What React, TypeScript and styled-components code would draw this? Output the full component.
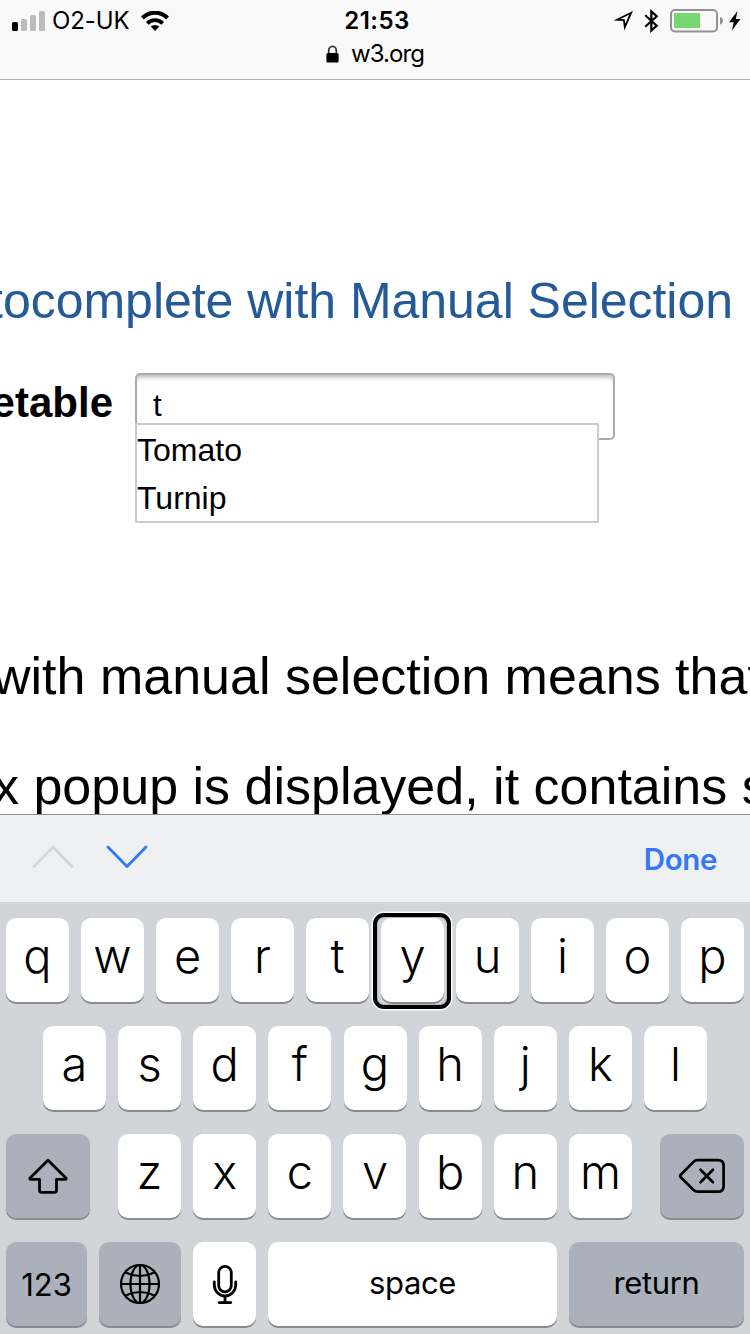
import React from "react";
import styled, { createGlobalStyle } from "styled-components";

const GlobalStyle = createGlobalStyle`
  *, *::before, *::after { box-sizing: border-box; }
  html, body { margin: 0; padding: 0; background: #fff; }
  body { overflow: hidden; }
`;

const ui = `Inter, "Liberation Sans", sans-serif`;
const web = `"Liberation Sans", Arial, sans-serif`;

const Screen = styled.div`
  width: 750px;
  height: 1334px;
  display: flex;
  flex-direction: column;
  overflow: hidden;
  background: #fff;
  color: #000;
`;

const Header = styled.header`
  flex: none;
  height: 80px;
  background: #f9f9f9;
  border-bottom: 1px solid #b2b2b2;
  font-family: ${ui};
`;

const StatusRow = styled.div`
  height: 41px;
  display: grid;
  grid-template-columns: 1fr auto 1fr;
  align-items: center;
  padding: 1px 9px 0 12px;
`;

const StatusGroup = styled.div<{ $end?: boolean }>`
  display: flex;
  align-items: center;
  justify-content: ${(p) => (p.$end ? "flex-end" : "flex-start")};
`;

const Carrier = styled.span`
  font-size: 24px;
  line-height: 40px;
  letter-spacing: -0.1px;
  margin: 0 11px 0 6px;
`;

const Clock = styled.span`
  font-size: 24px;
  line-height: 40px;
  font-weight: 600;
  letter-spacing: 0.5px;
  margin-left: 1px;
`;

const StatusIcons = styled.div`
  display: flex;
  align-items: center;
  justify-content: flex-end;
  gap: 11px;
`;

const Power = styled.div`
  display: flex;
  align-items: center;
  gap: 5px;
`;

const AddressRow = styled.div`
  display: flex;
  justify-content: center;
  align-items: center;
  gap: 12px;
  height: 25px;
`;

const Host = styled.span`
  font-size: 24px;
  line-height: 25px;
  letter-spacing: -0.9px;
`;

const Page = styled.main`
  flex: none;
  height: 734px;
  overflow: hidden;
  font-family: ${web};
`;

const Heading = styled.h3`
  margin: 0;
  padding: 192px 17px 0 0;
  display: flex;
  justify-content: flex-end;
  font-size: 50px;
  line-height: 58px;
  letter-spacing: -0.03px;
  font-weight: 400;
  white-space: nowrap;
  color: #255a99;
`;

const Field = styled.div`
  display: flex;
  height: 67px;
  margin-top: 43px;
`;

const Label = styled.label`
  flex: none;
  width: 135px;
  padding-right: 22px;
  display: flex;
  justify-content: flex-end;
  font-size: 42px;
  line-height: 60px;
  font-weight: 700;
`;

const Combobox = styled.div`
  position: relative;
  width: 480px;
  height: 67px;
`;

const TextBox = styled.div`
  height: 67px;
  border: 2px solid #a9abaa;
  border-radius: 5px;
  padding-left: 16px;
  font-size: 31px;
  line-height: 62px;
  box-shadow: inset 0 5px 5px -3px rgba(0, 0, 0, 0.3);
`;

const ListBox = styled.ul`
  position: absolute;
  left: 0;
  top: 50px;
  width: 464px;
  height: 100px;
  margin: 0;
  padding: 0;
  list-style: none;
  background: #fff;
  border: 2px solid #cbcbcb;
`;

const Option = styled.li`
  height: 48px;
  font-size: 32px;
  line-height: 50px;
`;

const Prose = styled.div`
  padding-top: 206px;
`;

const Line = styled.p<{ $shift: number }>`
  margin: 0 0 50px ${(p) => p.$shift}px;
  font-size: 52px;
  line-height: 60px;
  white-space: nowrap;
`;

const Accessory = styled.div`
  flex: none;
  height: 88px;
  display: flex;
  align-items: center;
  padding: 0 33px 0 32px;
  background: #eff0f2;
  border-top: 1px solid #8e8e91;
  font-family: ${ui};
`;

const Arrows = styled.div`
  display: flex;
  gap: 32px;
  padding-bottom: 3px;
`;

const Done = styled.span`
  margin-left: auto;
  padding-top: 1px;
  font-size: 29.5px;
  line-height: 40px;
  font-weight: 600;
  letter-spacing: -0.4px;
  color: #3478f7;
`;

const Keyboard = styled.section`
  flex: 1;
  display: flex;
  flex-direction: column;
  gap: 24px;
  padding: 16px 6px 0;
  background: #d1d4d9;
  font-family: ${ui};
`;

const KeyRow = styled.div<{ $inset?: number }>`
  display: flex;
  justify-content: space-between;
  padding: 0 ${(p) => p.$inset ?? 0}px;
`;

const KeyGroup = styled.div<{ $width: number }>`
  width: ${(p) => p.$width}px;
  display: flex;
  justify-content: space-between;
`;

const KeyCap = styled.div<{ $width?: number; $dark?: boolean }>`
  position: relative;
  flex: none;
  width: ${(p) => p.$width ?? 63}px;
  height: 84px;
  display: flex;
  align-items: center;
  justify-content: center;
  border-radius: 10px;
  background: ${(p) => (p.$dark ? "#abb1bb" : "#fff")};
  box-shadow: 0 2px 0 #898b8f;
`;

const Letter = styled.span`
  padding-bottom: 8px;
  font-size: 47px;
  line-height: 60px;
  font-weight: 350;
`;

const Word = styled.span<{ $lift?: number }>`
  padding-bottom: ${(p) => p.$lift ?? 0}px;
  letter-spacing: -0.4px;
  font-size: 31px;
  line-height: 40px;
`;

const Digits = styled.span`
  padding-top: 1px;
  font-size: 31px;
  line-height: 40px;
`;

const FocusRing = styled.span`
  position: absolute;
  inset: -5px -7px -7px -8.5px;
  border: 4px solid #000;
  border-radius: 11px;
  box-shadow: 0 0 0 1.5px #fff, inset 0 0 0 1px #b9bbc0;
`;

const SignalBars = () => (
  <svg width="34" height="20" viewBox="0 0 34 20">
    <rect x="0" y="11" width="6" height="9" rx="1.6" />
    <g fill="#bbb">
      <rect x="9" y="8" width="6" height="12" rx="1.6" />
      <rect x="18" y="4" width="6" height="16" rx="1.6" />
      <rect x="27" y="0" width="6" height="20" rx="1.6" />
    </g>
  </svg>
);

const Wifi = () => (
  <svg width="28" height="20" viewBox="0 0 28 20">
    <path d="M1.4 7a17.8 17.8 0 0 1 25.2 0" fill="none" stroke="#000" strokeWidth="4.2" />
    <path d="M6.300 12.300a10.900 10.900 0 0 1 15.400 0" fill="none" stroke="#000" strokeWidth="3.900" />
    <path d="M9.700 15.600a6.300 6.300 0 0 1 8.600 0L14 20z" />
  </svg>
);

const Location = () => (
  <svg width="19" height="20" viewBox="0 0 19 20">
    <path d="M17.200 1.700 3 8.700 9.900 9.200 10.800 16.200z" fill="none" stroke="#000" strokeWidth="1.800" />
  </svg>
);

const Bluetooth = () => (
  <svg width="15" height="24" viewBox="0 0 15 24">
    <path d="M1.200 6.300 12.700 16.800 7.300 21.600V2.400L12.700 7.200 1.200 17.700" fill="none" stroke="#000" strokeWidth="2.200" />
  </svg>
);

const Battery = () => (
  <svg width="54" height="24" viewBox="0 0 54 24">
    <rect x="1" y="1" width="46" height="21.4" rx="4" fill="none" stroke="#929292" strokeWidth="2" />
    <rect x="4" y="4" width="26" height="15" rx="1" fill="#76d672" />
    <path d="M50 8c4 1 4 6.500 0 7.500z" fill="#929292" />
  </svg>
);

const Bolt = () => (
  <svg width="12" height="20" viewBox="0 0 12 20">
    <path d="M8.500 0 0 11.200h4.700L3 19.500 11.500 8H6.800z" />
  </svg>
);

const Lock = () => (
  <svg width="13" height="18" viewBox="0 0 13 18">
    <path d="M2.700 9V5.500a3.800 4.200 0 0 1 7.600 0V9" fill="none" stroke="#333" strokeWidth="1.700" />
    <rect x="0.400" y="8" width="12.200" height="9.500" rx="1.500" />
  </svg>
);

const Chevron = ({ down }: { down?: boolean }) => (
  <svg width="42" height="24" viewBox="0 0 42 24">
    <path
      d={down ? "M2 2 21 21.500 40 2" : "M2 21.500 21 2 40 21.500"}
      fill="none"
      stroke={down ? "#3478f7" : "#d5d6d6"}
      strokeWidth="2.800"
      strokeLinecap="round"
      strokeLinejoin="round"
    />
  </svg>
);

const Shift = () => (
  <svg width="40" height="36" viewBox="0 0 40 36">
    <path
      d="M20 2.200 37.400 19.400Q39.200 21.400 37 21.400H28.500V32Q28.500 34.400 26.500 34.400H13.500Q11.500 34.400 11.500 32V21.400H3Q.8 21.400 2.600 19.400Z"
      fill="none"
      stroke="#000"
      strokeWidth="2.800"
      strokeLinejoin="round"
    />
  </svg>
);

const Delete = () => (
  <svg width="48" height="36" viewBox="0 0 48 36">
    <path
      d="M2.800 16.700 15.500 3.900Q17.200 2.200 19.500 2.200H40Q45.600 2.200 45.600 7.700V28.200Q45.600 33.700 40 33.700H19.500Q17.200 33.700 15.500 32L2.800 19.200Q1.600 17.950 2.800 16.700Z"
      fill="none"
      stroke="#000"
      strokeWidth="2.700"
    />
    <path d="M22.500 11.700 35 24.200M35 11.700 22.500 24.200" stroke="#000" strokeWidth="2.700" strokeLinecap="round" />
  </svg>
);

const Globe = () => (
  <svg width="42" height="42" viewBox="0 0 42 42" fill="none" stroke="#000" strokeWidth="2.200">
    <circle cx="21" cy="21" r="19" />
    <ellipse cx="21" cy="21" rx="9.500" ry="19" />
    <path d="M21 2V40M2 21H40M6.500 9.500Q21 16.500 35.500 9.500M6.500 32.500Q21 25.500 35.500 32.500" />
  </svg>
);

const Mic = () => (
  <svg width="26" height="42" viewBox="0 0 26 42" fill="none" stroke="#000" strokeWidth="2.800" strokeLinecap="round">
    <rect x="6.700" y="3.300" width="12.600" height="25.500" rx="6.300" />
    <path d="M2.300 19V21.800a10.700 11.200 0 0 0 21.400 0V19M13 33V39.500M7.200 39.600H18.800" />
  </svg>
);

const Letters = ({ keys, focused }: { keys: string; focused?: string }) => (
  <>
    {keys.split("").map((k) => (
      <KeyCap key={k}>
        <Letter>{k}</Letter>
        {k === focused && <FocusRing />}
      </KeyCap>
    ))}
  </>
);

export default function App() {
  return (
    <Screen>
      <GlobalStyle />
      <Header>
        <StatusRow>
          <StatusGroup>
            <SignalBars />
            <Carrier>O2-UK</Carrier>
            <Wifi />
          </StatusGroup>
          <Clock>21:53</Clock>
          <StatusIcons>
            <Location />
            <Bluetooth />
            <Power>
              <Battery />
              <Bolt />
            </Power>
          </StatusIcons>
        </StatusRow>
        <AddressRow>
          <Lock />
          <Host>w3.org</Host>
        </AddressRow>
      </Header>
      <Page>
        <Heading>tocomplete with Manual Selection</Heading>
        <Field>
          <Label>etable</Label>
          <Combobox>
            <TextBox>t</TextBox>
            <ListBox>
              <Option>Tomato</Option>
              <Option>Turnip</Option>
            </ListBox>
          </Combobox>
        </Field>
        <Prose>
          <Line $shift={-7}>with manual selection means that</Line>
          <Line $shift={-7}>x popup is displayed, it contains s</Line>
        </Prose>
      </Page>
      <Accessory>
        <Arrows>
          <Chevron />
          <Chevron down />
        </Arrows>
        <Done>Done</Done>
      </Accessory>
      <Keyboard>
        <KeyRow>
          <Letters keys="qwertyuiop" focused="y" />
        </KeyRow>
        <KeyRow $inset={37}>
          <Letters keys="asdfghjkl" />
        </KeyRow>
        <KeyRow>
          <KeyCap $width={84} $dark>
            <Shift />
          </KeyCap>
          <KeyGroup $width={514}>
            <Letters keys="zxcvbnm" />
          </KeyGroup>
          <KeyCap $width={84} $dark>
            <Delete />
          </KeyCap>
        </KeyRow>
        <KeyRow>
          <KeyCap $width={81} $dark>
            <Digits>123</Digits>
          </KeyCap>
          <KeyCap $width={82} $dark>
            <Globe />
          </KeyCap>
          <KeyCap>
            <Mic />
          </KeyCap>
          <KeyCap $width={289}>
            <Word $lift={3}>space</Word>
          </KeyCap>
          <KeyCap $width={175} $dark>
            <Word $lift={3}>return</Word>
          </KeyCap>
        </KeyRow>
      </Keyboard>
    </Screen>
  );
}
